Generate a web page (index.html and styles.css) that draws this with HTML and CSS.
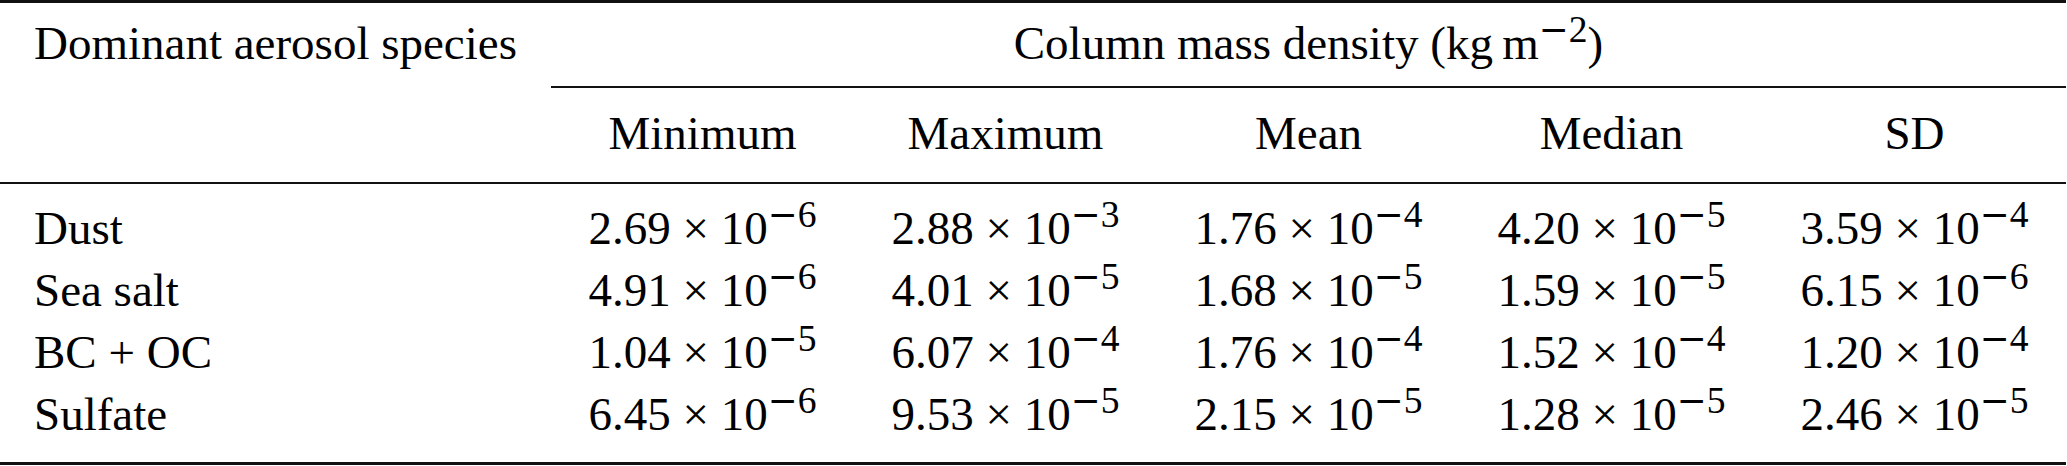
FILE: index.html
```html
<!DOCTYPE html>
<html lang="en">
<head>
    <meta charset="UTF-8">
    <title>Column mass density by aerosol species</title>

    <!-- For styling -->
    <link rel="stylesheet" href="styles.css">
</head>
<body>
    <table class="stats">
        <colgroup>
            <col class="name-col">
            <col><col><col><col><col>
        </colgroup>
        <thead>
            <tr class="group-row">
                <th class="species">Dominant aerosol species</th>
                <th class="group" colspan="5">Column mass density (kg&thinsp;m<sup><span class="minus">&minus;</span>2</sup>)</th>
            </tr>
            <tr class="stat-row">
                <th class="species"></th>
                <th>Minimum</th>
                <th>Maximum</th>
                <th>Mean</th>
                <th>Median</th>
                <th>SD</th>
            </tr>
        </thead>
        <tbody>
            <tr class="first">
                <td class="species">Dust</td>
                <td>2.69 &times; 10<sup><span class="minus">&minus;</span>6</sup></td>
                <td>2.88 &times; 10<sup><span class="minus">&minus;</span>3</sup></td>
                <td>1.76 &times; 10<sup><span class="minus">&minus;</span>4</sup></td>
                <td>4.20 &times; 10<sup><span class="minus">&minus;</span>5</sup></td>
                <td>3.59 &times; 10<sup><span class="minus">&minus;</span>4</sup></td>
            </tr>
            <tr>
                <td class="species">Sea salt</td>
                <td>4.91 &times; 10<sup><span class="minus">&minus;</span>6</sup></td>
                <td>4.01 &times; 10<sup><span class="minus">&minus;</span>5</sup></td>
                <td>1.68 &times; 10<sup><span class="minus">&minus;</span>5</sup></td>
                <td>1.59 &times; 10<sup><span class="minus">&minus;</span>5</sup></td>
                <td>6.15 &times; 10<sup><span class="minus">&minus;</span>6</sup></td>
            </tr>
            <tr>
                <td class="species">BC + OC</td>
                <td>1.04 &times; 10<sup><span class="minus">&minus;</span>5</sup></td>
                <td>6.07 &times; 10<sup><span class="minus">&minus;</span>4</sup></td>
                <td>1.76 &times; 10<sup><span class="minus">&minus;</span>4</sup></td>
                <td>1.52 &times; 10<sup><span class="minus">&minus;</span>4</sup></td>
                <td>1.20 &times; 10<sup><span class="minus">&minus;</span>4</sup></td>
            </tr>
            <tr class="last">
                <td class="species">Sulfate</td>
                <td>6.45 &times; 10<sup><span class="minus">&minus;</span>6</sup></td>
                <td>9.53 &times; 10<sup><span class="minus">&minus;</span>5</sup></td>
                <td>2.15 &times; 10<sup><span class="minus">&minus;</span>5</sup></td>
                <td>1.28 &times; 10<sup><span class="minus">&minus;</span>5</sup></td>
                <td>2.46 &times; 10<sup><span class="minus">&minus;</span>5</sup></td>
            </tr>
        </tbody>
    </table>
</body>
</html>
```

FILE: styles.css
```css
body {
    margin: 0;
    background: #fff;
    color: #000;
    font-family: "Liberation Serif", "Times New Roman", serif;
}

.stats {
    width: 2066px;
    table-layout: fixed;
    border-collapse: separate;
    border-spacing: 0;
    border-top: 3px solid #111;
    border-bottom: 3px solid #111;
    font-size: 47px;
    line-height: 62px;
}

.name-col {
    width: 551px;
}

.stats th,
.stats td {
    font-weight: normal;
    text-align: center;
    white-space: nowrap;
    padding: 0;
}

.stats .species {
    text-align: left;
    padding-left: 34px;
}

/* top header row, cmidrule under the group title */
.group-row th {
    padding-top: 9px;
    padding-bottom: 12px;
    border-bottom: 2px solid transparent;
}

.group-row .group {
    border-bottom-color: #111;
}

.stat-row th {
    padding-top: 14px;
    padding-bottom: 18px;
    border-bottom: 2px solid #111;
}

.first td {
    padding-top: 13px;
}

.last td {
    padding-bottom: 17px;
}

sup {
    font-size: 0.8em;
    line-height: 0;
    vertical-align: 17px;
}

.minus {
    font-family: "DejaVu Sans", sans-serif;
    font-size: 0.95em;
}
```
